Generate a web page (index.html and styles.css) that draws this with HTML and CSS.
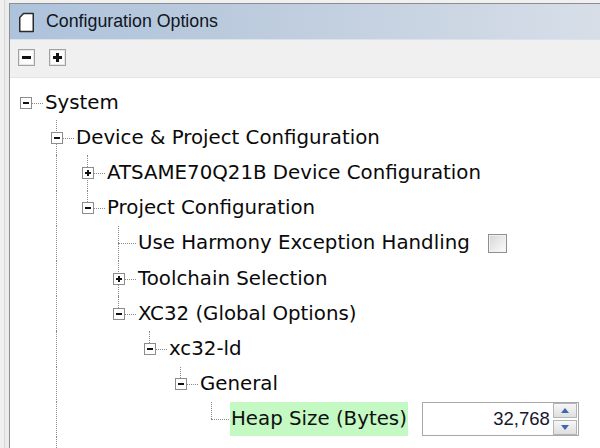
FILE: index.html
```html
<!DOCTYPE html>
<html>
<head>
<meta charset="utf-8">
<link rel="stylesheet" href="styles.css">
</head>
<body>
<div class="app">
  <div class="strip"></div>
  <div class="panel">
    <div class="titlebar">
      <svg class="doc-icon" width="17" height="21" viewBox="0 0 17 21">
        <path d="M5.5 1.5 H15.25 V19.5 H1.75 V5.5 Z" fill="#fff" stroke="#2b2b2b" stroke-width="1.5" stroke-linejoin="round"/>
      </svg>
      <span class="title">Configuration Options</span>
    </div>
    <div class="toolbar">
      <span class="tbtn"><span class="hbar"></span></span>
      <span class="tbtn"><span class="hbar"></span><span class="vbar"></span></span>
    </div>
    <div class="tree">
      <div class="row">
        <span class="cell root"><span class="box minus"></span></span>
        <span class="label">System</span>
      </div>
      <div class="row">
        <span class="cell"></span>
        <span class="cell tee"><span class="box minus"></span></span>
        <span class="label">Device &amp; Project Configuration</span>
      </div>
      <div class="row">
        <span class="cell"></span>
        <span class="cell v"></span>
        <span class="cell tee"><span class="box plus"></span></span>
        <span class="label">ATSAME70Q21B Device Configuration</span>
      </div>
      <div class="row">
        <span class="cell"></span>
        <span class="cell v"></span>
        <span class="cell ell"><span class="box minus"></span></span>
        <span class="label">Project Configuration</span>
      </div>
      <div class="row">
        <span class="cell"></span>
        <span class="cell v"></span>
        <span class="cell"></span>
        <span class="cell tee"></span>
        <span class="label">Use Harmony Exception Handling</span>
        <span class="checkbox"></span>
      </div>
      <div class="row">
        <span class="cell"></span>
        <span class="cell v"></span>
        <span class="cell"></span>
        <span class="cell tee"><span class="box plus"></span></span>
        <span class="label">Toolchain Selection</span>
      </div>
      <div class="row">
        <span class="cell"></span>
        <span class="cell v"></span>
        <span class="cell"></span>
        <span class="cell ell"><span class="box minus"></span></span>
        <span class="label">XC32 (Global Options)</span>
      </div>
      <div class="row">
        <span class="cell"></span>
        <span class="cell v"></span>
        <span class="cell"></span>
        <span class="cell"></span>
        <span class="cell ell"><span class="box minus"></span></span>
        <span class="label">xc32-ld</span>
      </div>
      <div class="row">
        <span class="cell"></span>
        <span class="cell v"></span>
        <span class="cell"></span>
        <span class="cell"></span>
        <span class="cell"></span>
        <span class="cell ell"><span class="box minus"></span></span>
        <span class="label">General</span>
      </div>
      <div class="row">
        <span class="cell"></span>
        <span class="cell v"></span>
        <span class="cell"></span>
        <span class="cell"></span>
        <span class="cell"></span>
        <span class="cell"></span>
        <span class="cell ell"></span>
        <span class="label selected">Heap Size (Bytes)</span>
        <span class="spinner">
          <span class="value">32,768</span>
          <span class="spin-btns">
            <span class="spin-btn up"></span>
            <span class="spin-btn down"></span>
          </span>
        </span>
      </div>
      <div class="row">
        <span class="cell"></span>
        <span class="cell v"></span>
        <span class="cell"></span>
        <span class="cell"></span>
        <span class="cell"></span>
        <span class="cell"></span>
        <span class="cell"></span>
        <span class="label next">fflash Size</span>
      </div>
    </div>
  </div>
</div>
</body>
</html>
```
FILE: styles.css
```css
html, body {
  margin: 0;
  padding: 0;
}
body {
  width: 600px;
  height: 448px;
  overflow: hidden;
  background: #f0f0f0;
}
.app {
  display: flex;
  height: 448px;
}
.strip {
  width: 9px;
  flex: none;
  background: linear-gradient(to right, #f0f0f0 0, #f0f0f0 4px, #d6d6d6 4px, #d6d6d6 5px, #ececec 5px);
}
.panel {
  flex: 1;
  margin-top: 3px;
  border-top: 1px solid #8e8e8e;
  border-left: 1px solid #8e8e8e;
  display: flex;
  flex-direction: column;
  min-width: 0;
}
.titlebar {
  height: 35px;
  border-bottom: 1px solid #dbe2ea;
  background: linear-gradient(to right, #adc3dc 0%, #bccbdd 40%, #d7dee8 100%);
  display: flex;
  align-items: center;
  padding-left: 8px;
}
.doc-icon {
  flex: none;
  margin-right: 11px;
  margin-top: 1px;
}
.title {
  font-family: "Liberation Sans", Arial, Helvetica, sans-serif;
  font-size: 17.8px;
  color: #111522;
}
.toolbar {
  border-bottom: 1px solid #e4e4e4;
  background: #f0f0f0;
  display: flex;
  align-items: flex-start;
  padding: 9px 0 0 8px;
  box-sizing: border-box;
  height: 38px;
  gap: 14px;
}
.tbtn {
  width: 17px;
  height: 17px;
  box-sizing: border-box;
  border: 1px solid #a2a2a2;
  background: #fcfcfc;
  box-shadow: inset 0 0 0 1px #e6e6e6;
  position: relative;
}
.hbar {
  position: absolute;
  left: 3px;
  right: 3px;
  top: 6px;
  height: 3px;
  background: #111;
}
.vbar {
  position: absolute;
  top: 3px;
  bottom: 3px;
  left: 6px;
  width: 3px;
  background: #111;
}
.tree {
  flex: 1;
  background: #fff;
  padding-top: 7px;
  font-family: "DejaVu Sans", Verdana, sans-serif;
  font-size: 19.8px;
  color: #0a0a0a;
  overflow: hidden;
}
.row {
  height: 35.2px;
  display: flex;
  align-items: center;
  white-space: nowrap;
}
.cell {
  width: 31px;
  flex: none;
  align-self: stretch;
  position: relative;
  display: flex;
  align-items: center;
  justify-content: center;
}
.v::before,
.tee::before,
.ell::before {
  content: "";
  position: absolute;
  left: 15px;
  top: 0;
  bottom: 0;
  border-left: 1px dotted #8a8a8a;
}
.ell::before {
  bottom: 50%;
}
.root::after,
.tee::after,
.ell::after {
  content: "";
  position: absolute;
  left: 15px;
  top: 50%;
  width: 18px;
  border-top: 1px dotted #8a8a8a;
}
.box {
  width: 12px;
  height: 12px;
  box-sizing: border-box;
  border: 1px solid #8c8c8c;
  background: #fff;
  position: relative;
  z-index: 1;
}
.box::before {
  content: "";
  position: absolute;
  left: 2px;
  top: 4px;
  width: 6px;
  height: 2px;
  background: #111;
}
.plus::after {
  content: "";
  position: absolute;
  left: 4px;
  top: 2px;
  width: 2px;
  height: 6px;
  background: #111;
}
.label {
  margin-left: 3px;
  padding: 0 1px;
  line-height: 34px;
}
.next {
  padding-top: 6px;
}
.selected {
  background: #c4f9c4;
  color: #101010;
}
.checkbox {
  width: 19px;
  height: 19px;
  box-sizing: border-box;
  margin-left: 17px;
  border: 1px solid #8f8f8f;
  box-shadow: inset 0 0 0 1px #f2f2f2;
  background: linear-gradient(135deg, #d4d4d4 0%, #eeeeee 60%, #fbfbfb 100%);
}
.spinner {
  margin-left: 14px;
  width: 157px;
  height: 34px;
  box-sizing: border-box;
  border: 1px solid #a8a8a8;
  background: #fff;
  display: flex;
  align-items: center;
  justify-content: flex-end;
}
.value {
  font-family: "Liberation Sans", Arial, Helvetica, sans-serif;
  font-size: 18.5px;
  color: #16182c;
  margin-right: 3px;
}
.spin-btns {
  display: flex;
  flex-direction: column;
  gap: 2px;
  margin-right: 1px;
}
.spin-btn {
  width: 24px;
  height: 15px;
  box-sizing: border-box;
  border: 1px solid #b4b4b4;
  background: linear-gradient(#f7f7f7, #dedede);
  display: flex;
  align-items: center;
  justify-content: center;
}
.spin-btn::before {
  content: "";
  width: 0;
  height: 0;
  border-left: 4.5px solid transparent;
  border-right: 4.5px solid transparent;
}
.up::before {
  border-bottom: 5px solid #3f65b3;
}
.down::before {
  border-top: 5px solid #3f65b3;
}
```
